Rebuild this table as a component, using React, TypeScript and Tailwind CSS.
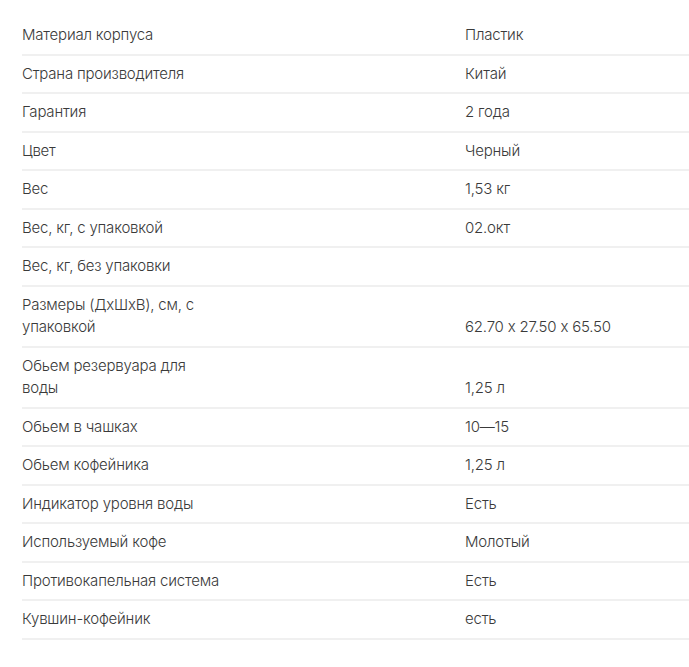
import React from "react";

const rows: [string, string][] = [
  ["Материал корпуса", "Пластик"],
  ["Страна производителя", "Китай"],
  ["Гарантия", "2 года"],
  ["Цвет", "Черный"],
  ["Вес", "1,53 кг"],
  ["Вес, кг, с упаковкой", "02.окт"],
  ["Вес, кг, без упаковки", ""],
  ["Размеры (ДхШхВ), см, с упаковкой", "62.70 x 27.50 x 65.50"],
  ["Обьем резервуара для воды", "1,25 л"],
  ["Обьем в чашках", "10—15"],
  ["Обьем кофейника", "1,25 л"],
  ["Индикатор уровня воды", "Есть"],
  ["Используемый кофе", "Молотый"],
  ["Противокапельная система", "Есть"],
  ["Кувшин-кофейник", "есть"],
];

export default function App() {
  return (
    <div
      className="w-[689px] h-[667px] bg-white pt-[17px] pl-[22px] text-[#3a3a3a] text-[15px] leading-[22.5px] font-[350]"
      style={{ fontFamily: "Inter, 'Noto Sans', sans-serif" }}
    >
      {rows.map(([k, v], i) => (
        <div
          key={i}
          className="flex items-end py-[7px] border-b-[2px] border-[#f0f0f0]"
        >
          <div className="w-[443px] shrink-0">
            <div className="max-w-[200px] tracking-[-0.2px]">{k}</div>
          </div>
          <div className="tracking-[-0.2px]">{v}</div>
        </div>
      ))}
    </div>
  );
}
